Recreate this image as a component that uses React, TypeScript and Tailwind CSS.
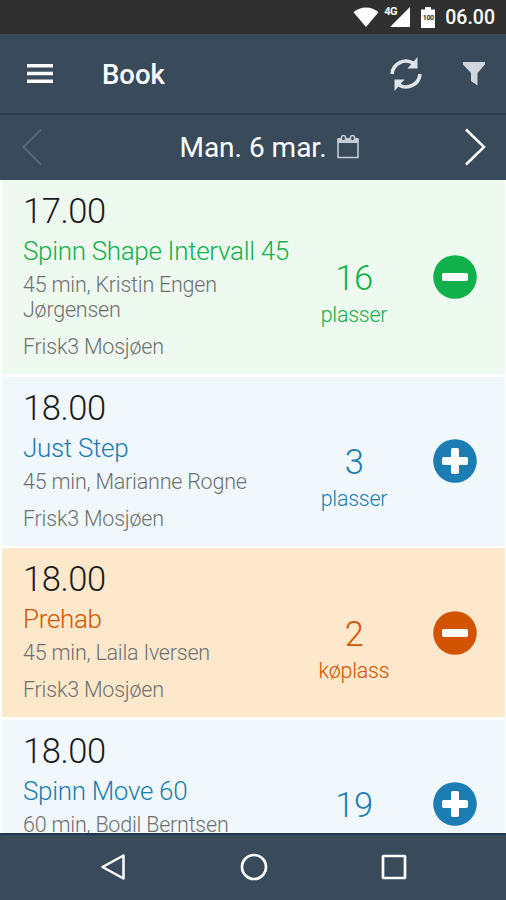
import { clsx } from 'clsx';

type Tone = 'green' | 'blue' | 'orange';

interface Session {
  time: string;
  title: string;
  details: string;
  venue: string;
  count: number;
  unit: string;
  tone: Tone;
  booked: boolean;
}

const SESSIONS: Session[] = [
  { time: '17.00', title: 'Spinn Shape Intervall 45', details: '45 min, Kristin Engen Jørgensen', venue: 'Frisk3 Mosjøen', count: 16, unit: 'plasser', tone: 'green', booked: true },
  { time: '18.00', title: 'Just Step', details: '45 min, Marianne Rogne', venue: 'Frisk3 Mosjøen', count: 3, unit: 'plasser', tone: 'blue', booked: false },
  { time: '18.00', title: 'Prehab', details: '45 min, Laila Iversen', venue: 'Frisk3 Mosjøen', count: 2, unit: 'køplass', tone: 'orange', booked: true },
  { time: '18.00', title: 'Spinn Move 60', details: '60 min, Bodil Berntsen', venue: 'Frisk3 Mosjøen', count: 19, unit: 'plasser', tone: 'blue', booked: false },
];

const CARD_BG: Record<Tone, string> = {
  green: 'bg-[#eef9ef]',
  blue: 'bg-[#f0f8fb]',
  orange: 'bg-[#fde8cb]',
};

const TEXT: Record<Tone, string> = {
  green: 'text-[#10b04b]',
  blue: 'text-[#1b7db3]',
  orange: 'text-[#d35400]',
};

function StatusBar() {
  return (
    <div className="h-[34px] flex-shrink-0 bg-[#303030] flex items-center justify-end pr-[11px] text-white">
      <svg width="26" height="20" viewBox="0 0 26 20" className="mr-[5px]">
        <path d="M0.5 5.2C7.5-1.2 18.500-1.200 25.500 5.200L13 20Z" fill="currentColor" />
      </svg>
      <div className="relative w-[27px] h-5 mr-[10px]">
        <span className="absolute left-0 -top-[2px] text-[11px] leading-[13px] font-bold tracking-[-0.5px]">4G</span>
        <svg width="27" height="20" viewBox="0 0 27 20">
          <path d="M26 0V20H6Z" fill="currentColor" />
        </svg>
      </div>
      <div className="relative w-[14px] h-[21px] mr-[10px]">
        <svg width="14" height="21" viewBox="0 0 14 21">
          <path d="M4 0H10V2.500H14V21H0V2.500H4Z" fill="currentColor" />
        </svg>
        <span className="absolute inset-x-0 top-[6px] text-center text-[7px] leading-[10px] font-bold tracking-[-0.3px] text-[#303030]">100</span>
      </div>
      <span className="mt-[2px] text-[19.5px] leading-none font-medium">06.00</span>
    </div>
  );
}

function AppBar() {
  return (
    <header className="h-[79px] flex-shrink-0 flex items-center pl-[27px] pr-[21px] text-white">
      <svg width="26" height="20" viewBox="0 0 26 20">
        <path d="M0 1.800H26M0 9.500H26M0 17.200H26" stroke="currentColor" strokeWidth="3.4" />
      </svg>
      <h1 className="ml-[49px] mt-[2px] text-[27.5px] leading-8 font-medium">Book</h1>
      <svg width="32" height="34" viewBox="0 0 32 34" className="ml-auto text-[#dfe4e8]">
        <path d="M2 17A14 14 0 0 1 23.500 6.300M30 17A14 14 0 0 1 8.500 27.700" fill="none" stroke="currentColor" strokeWidth="3.600" />
        <path d="M27.500 0V11.500H17.500ZM4.500 34V22.500H14.500Z" fill="currentColor" />
      </svg>
      <svg width="22" height="24" viewBox="0 0 22 24" className="ml-[41px] mt-px text-[#d0d6dc]">
        <path d="M0 0H22V2.500L14.500 11V23.500L8 19V11L0 2.500Z" fill="currentColor" />
      </svg>
    </header>
  );
}

function DateBar() {
  return (
    <div className="h-[67px] flex-shrink-0 flex items-center justify-between border-t-2 border-[#2c3d50] pl-[22px] pr-5 text-white">
      <svg width="20" height="38" viewBox="0 0 20 38" className="-mt-[2px] text-[#596877]">
        <path d="M19 1.500L1.500 19L19 36.500" fill="none" stroke="currentColor" strokeWidth="2" />
      </svg>
      <div className="flex items-center pl-[31px]">
        <span className="mt-px text-[28px] leading-8">Man. 6 mar.</span>
        <svg width="22" height="25" viewBox="0 0 22 25" className="ml-[10px] -mt-[2px] text-[#c5ccd3]">
          <path d="M1 6H21V23.500H1Z" fill="none" stroke="currentColor" strokeWidth="1.600" />
          <path d="M0.500 4H21.500V9H0.500Z" fill="currentColor" />
          <path d="M4.500 6V3.500A2 2 0 0 1 8.500 3.500V6M13.500 6V3.500A2 2 0 0 1 17.500 3.500V6" fill="#394a5b" stroke="currentColor" strokeWidth="1.500" />
        </svg>
      </div>
      <svg width="21" height="38" viewBox="0 0 21 38" className="-mt-[2px]">
        <path d="M1 1.500L19 19L1 36.500" fill="none" stroke="currentColor" strokeWidth="2.500" />
      </svg>
    </div>
  );
}

function ToggleButton({ booked, tone }: { booked: boolean; tone: Tone }) {
  return (
    <button className={clsx('block', TEXT[tone])}>
      <svg width="44" height="44" viewBox="0 0 44 44">
        <circle cx="22" cy="22" r="21.800" fill="currentColor" />
        <rect x="9" y="18" width="26" height="8" rx="1.800" fill="#fff" />
        {!booked && <rect x="18" y="9" width="8" height="26" rx="1.800" fill="#fff" />}
      </svg>
    </button>
  );
}

function SessionCard({ session }: { session: Session }) {
  const { time, title, details, venue, count, unit, tone, booked } = session;
  return (
    <li className={clsx('flex items-center pl-[21px] pr-7', CARD_BG[tone])}>
      <div className="w-[280px] pt-[11px] pb-[15px] font-light">
        <div className="text-[34.5px] leading-[40px] tracking-[-0.4px] text-[#1c1c1c]">{time}</div>
        <div className={clsx('mt-[3px] text-[26px] leading-[34px] tracking-[-0.32px] whitespace-nowrap', TEXT[tone])}>{title}</div>
        <div className="mt-1 w-[230px] text-[21.5px] leading-[25px] tracking-[-0.22px] text-[#6e7071]">{details}</div>
        <div className="mt-3 text-[21.5px] leading-[25px] tracking-[-0.22px] text-[#6e7071]">{venue}</div>
      </div>
      <div className={clsx('w-[102px] pt-8 text-center font-light', TEXT[tone])}>
        <div className="text-[34.5px] leading-[40px] tracking-[-0.4px]">{count}</div>
        <div className="mt-[4px] text-[21.5px] leading-[26px] tracking-[-0.25px]">{unit}</div>
      </div>
      <div className="ml-auto">
        <ToggleButton booked={booked} tone={tone} />
      </div>
    </li>
  );
}

function NavBar() {
  return (
    <nav className="h-[67px] flex-shrink-0 flex items-center justify-between border-t-2 border-[#1f3850] bg-[#394a5b] pl-[100px] pr-[99px] pb-[2px] text-white">
      <svg width="26" height="28" viewBox="0 0 26 28">
        <path d="M23.500 2.500V25.500L2.500 14Z" fill="none" stroke="currentColor" strokeWidth="2.500" strokeLinejoin="round" />
      </svg>
      <svg width="28" height="28" viewBox="0 0 28 28">
        <circle cx="14" cy="14" r="12" fill="none" stroke="currentColor" strokeWidth="2.700" />
      </svg>
      <svg width="26" height="26" viewBox="0 0 26 26">
        <rect x="2" y="2" width="22" height="22" rx="0.500" fill="none" stroke="currentColor" strokeWidth="2.700" />
      </svg>
    </nav>
  );
}

export default function App() {
  return (
    <div className="h-[900px] w-[506px] flex flex-col overflow-hidden bg-[#394a5b] font-['Roboto',sans-serif]">
      <StatusBar />
      <AppBar />
      <DateBar />
      <main className="flex-1 min-h-0 overflow-hidden bg-white pl-[2px] pr-px">
        <ul className="flex flex-col gap-[2.5px]">
          {SESSIONS.map((session, i) => (
            <SessionCard key={i} session={session} />
          ))}
        </ul>
      </main>
      <NavBar />
    </div>
  );
}
